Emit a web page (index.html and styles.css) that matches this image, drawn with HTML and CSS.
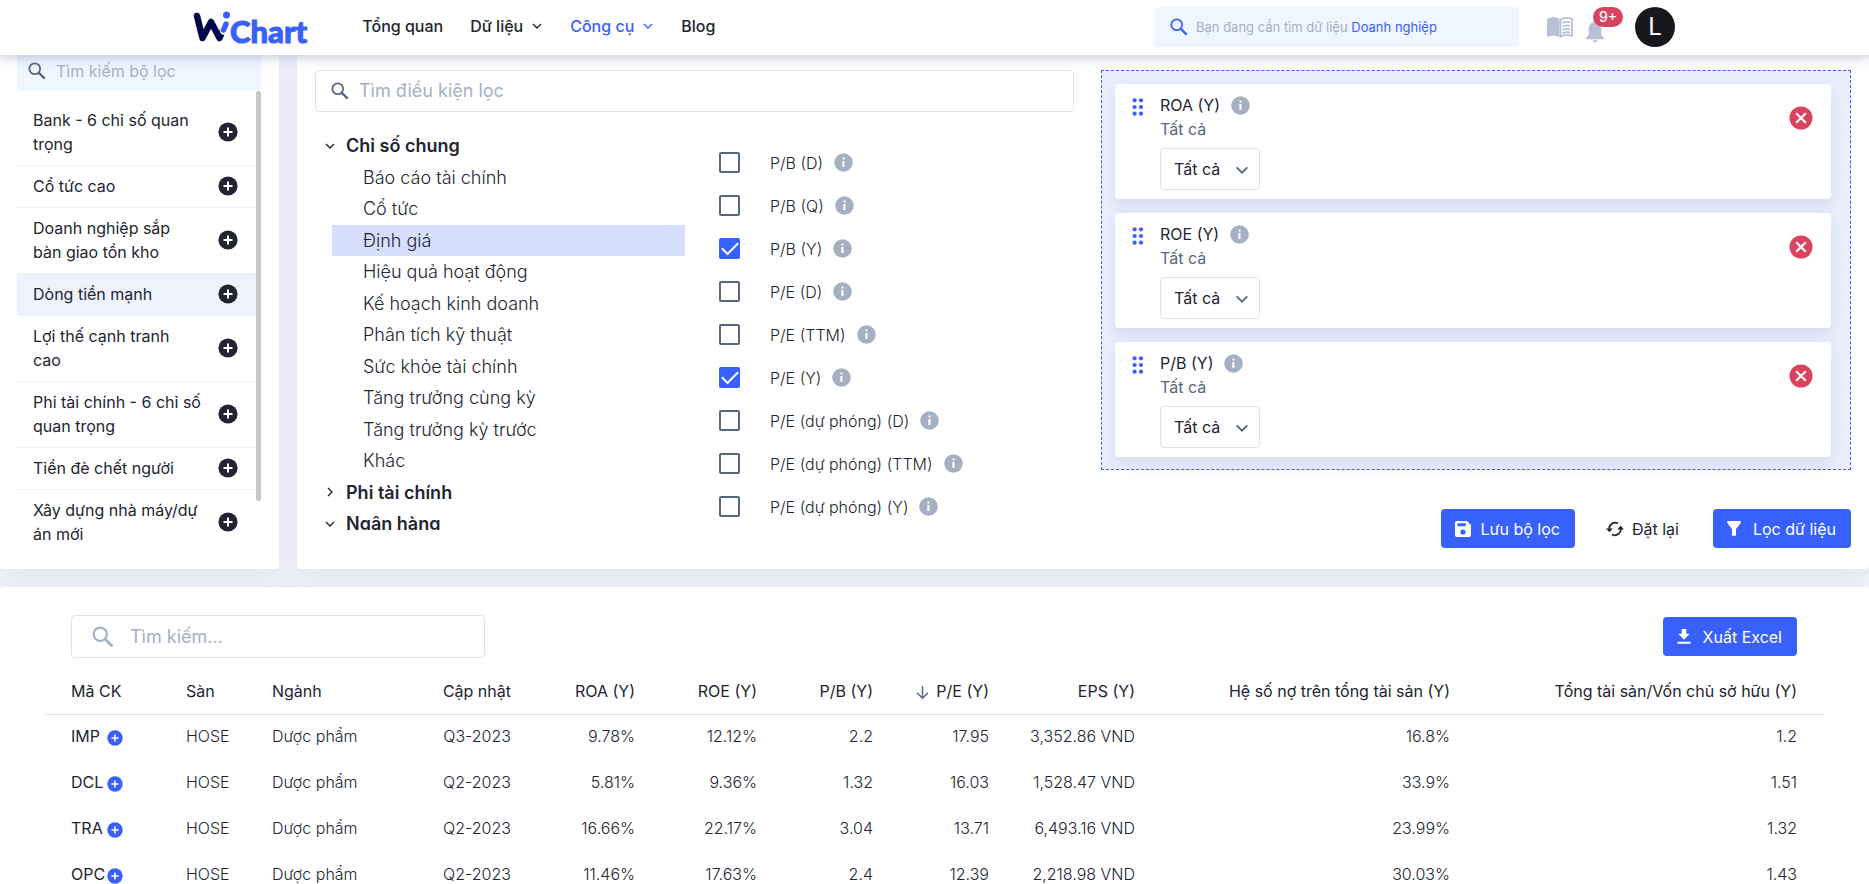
FILE: index.html
```html
<!DOCTYPE html>
<html lang="vi">
<head>
<meta charset="utf-8">
<title>WiChart - Bộ lọc cổ phiếu</title>
<link rel="stylesheet" href="styles.css">
</head>
<body>
<svg class="defs" aria-hidden="true">
  <symbol id="search" viewBox="0 0 20 20"><circle cx="7.5" cy="7.5" r="6" fill="none" stroke="currentColor" stroke-width="2"/><path d="M11.8 11.8 18.500 18.500" stroke="currentColor" stroke-width="2.600"/></symbol>
  <symbol id="down" viewBox="0 0 12 12"><path d="M2 4l4 4 4-4" fill="none" stroke="currentColor" stroke-width="1.400"/></symbol>
  <symbol id="plus" viewBox="0 0 20 20"><circle cx="10" cy="10" r="9.6" fill="currentColor"/><path d="M10 5.5v9M5.5 10h9" stroke="#fff" stroke-width="2"/></symbol>
  <symbol id="info" viewBox="0 0 20 20"><circle cx="10" cy="10" r="9.8" fill="#a6b0c3"/><path d="M9 4.8h2v2H9zM8.8 8.4H11v6.4H8.8z" fill="#fff"/></symbol>
  <symbol id="dots" viewBox="0 0 12 18"><g fill="currentColor"><circle cx="2.6" cy="2.3" r="2.1"/><circle cx="9" cy="2.3" r="2.1"/><circle cx="2.6" cy="9" r="2.1"/><circle cx="9" cy="9" r="2.1"/><circle cx="2.6" cy="15.7" r="2.1"/><circle cx="9" cy="15.7" r="2.1"/></g></symbol>
  <symbol id="remove" viewBox="0 0 24 24"><circle cx="12" cy="12" r="11.5" fill="#d9435e"/><path d="M7.2 7.2l9.600 9.600M16.800 7.200l-9.600 9.600" stroke="#fff" stroke-width="2.2"/></symbol>
</svg>
<div class="page">
<header class="header">
  <a class="logo" href="#" aria-label="WiChart">
    <svg width="37" height="33" viewBox="0 0 37 33"><g fill="none" stroke-linecap="round" stroke-linejoin="round"><path d="M4 5 9.500 27 18 11 26.500 27 29.500 20" stroke="#03064a" stroke-width="6.500"/><path d="M34 12.500 31 19.500" stroke="#fff" stroke-width="8.500"/><path d="M33 13 30.500 19" stroke="#3861fb" stroke-width="5.500"/></g><circle cx="33.500" cy="4" r="3.500" fill="#3861fb"/></svg>
    <span class="logo-name">Chart</span>
  </a>
  <nav class="nav">
    <a href="#">Tổng quan</a>
    <a href="#">Dữ liệu <svg class="i12"><use href="#down"/></svg></a>
    <a class="on" href="#">Công cụ <svg class="i12"><use href="#down"/></svg></a>
    <a href="#">Blog</a>
  </nav>
  <button class="find" type="button"><svg class="i18"><use href="#search"/></svg><span>Bạn đang cần tìm dữ liệu <b>Doanh nghiệp</b></span></button>
  <button class="plain book" type="button" aria-label="Hướng dẫn"><svg width="26" height="21" viewBox="0 0 26 21"><path d="M0 2C4-.2 9-.2 12.500 2.200V20.500C9 18.300 4 18.300 0 20.200z" fill="#b7c0d4"/><path d="M13.500 2.700C17 .5 21 .5 25 2.200V19C21 17.500 17 17.500 13.500 19.700z" fill="#fff" stroke="#b7c0d4" stroke-width="1.800"/><path d="M15.500 6c2.500-1.300 5-1.300 7.500-.7M15.500 9.500c2.500-1.300 5-1.300 7.500-.7M15.500 13c2.500-1.300 5-1.300 7.500-.7M15.500 16.300c2.500-1.300 5-1.300 7.500-.7" fill="none" stroke="#b7c0d4" stroke-width="1.700"/></svg></button>
  <button class="plain bell" type="button" aria-label="Thông báo"><svg width="20" height="23" viewBox="0 0 20 23"><path d="M10 0a1.500 1.500 0 0 1 1.500 1.500v.8C14.500 3 16.300 5.500 16.300 9v6l3 3.200v1H.7v-1l3-3.200V9c0-3.500 1.800-6 4.800-6.700v-.8A1.500 1.500 0 0 1 10 0zM7.700 20.300h4.600a2.300 2.300 0 0 1-4.600 0z" fill="#b7c0d4"/></svg><span class="badge">9+</span></button>
  <button class="avatar" type="button">L</button>
</header>

<main class="main">
  <aside class="card side">
    <label class="side-search"><svg class="i18"><use href="#search"/></svg><input type="text" placeholder="Tìm kiếm bộ lọc" aria-label="Tìm kiếm bộ lọc"></label>
    <div class="side-body">
      <ul class="presets">
        <li><span>Bank - 6 chỉ số quan trọng</span><button class="plain" type="button" aria-label="Thêm"><svg class="i20"><use href="#plus"/></svg></button></li>
        <li><span>Cổ tức cao</span><button class="plain" type="button" aria-label="Thêm"><svg class="i20"><use href="#plus"/></svg></button></li>
        <li><span>Doanh nghiệp sắp bàn giao tồn kho</span><button class="plain" type="button" aria-label="Thêm"><svg class="i20"><use href="#plus"/></svg></button></li>
        <li class="on"><span>Dòng tiền mạnh</span><button class="plain" type="button" aria-label="Thêm"><svg class="i20"><use href="#plus"/></svg></button></li>
        <li><span>Lợi thế cạnh tranh<br>cao</span><button class="plain" type="button" aria-label="Thêm"><svg class="i20"><use href="#plus"/></svg></button></li>
        <li><span>Phi tài chính - 6 chỉ số quan trọng</span><button class="plain" type="button" aria-label="Thêm"><svg class="i20"><use href="#plus"/></svg></button></li>
        <li><span>Tiền đè chết người</span><button class="plain" type="button" aria-label="Thêm"><svg class="i20"><use href="#plus"/></svg></button></li>
        <li><span>Xây dựng nhà máy/dự án mới</span><button class="plain" type="button" aria-label="Thêm"><svg class="i20"><use href="#plus"/></svg></button></li>
      </ul>
      <div class="thumb"></div>
    </div>
  </aside>

  <section class="card builder">
    <div class="pick">
      <label class="box cond"><svg class="i18"><use href="#search"/></svg><input type="text" placeholder="Tìm điều kiện lọc" aria-label="Tìm điều kiện lọc"></label>
      <div class="pick-body">
        <div class="tree">
          <div class="group"><svg class="i12"><use href="#down"/></svg>Chỉ số chung</div>
          <ul>
            <li>Báo cáo tài chính</li><li>Cổ tức</li><li class="on">Định giá</li><li>Hiệu quả hoạt động</li><li>Kế hoạch kinh doanh</li><li>Phân tích kỹ thuật</li><li>Sức khỏe tài chính</li><li>Tăng trưởng cùng kỳ</li><li>Tăng trưởng kỳ trước</li><li>Khác</li>
          </ul>
          <div class="group shut"><svg class="i12"><use href="#down"/></svg>Phi tài chính</div>
          <div class="group"><svg class="i12"><use href="#down"/></svg>Ngân hàng</div>
        </div>
        <div class="checks">
          <label><input type="checkbox"><span>P/B (D)</span><svg class="i19"><use href="#info"/></svg></label>
          <label><input type="checkbox"><span>P/B (Q)</span><svg class="i19"><use href="#info"/></svg></label>
          <label><input type="checkbox" checked><span>P/B (Y)</span><svg class="i19"><use href="#info"/></svg></label>
          <label><input type="checkbox"><span>P/E (D)</span><svg class="i19"><use href="#info"/></svg></label>
          <label><input type="checkbox"><span>P/E (TTM)</span><svg class="i19"><use href="#info"/></svg></label>
          <label><input type="checkbox" checked><span>P/E (Y)</span><svg class="i19"><use href="#info"/></svg></label>
          <label><input type="checkbox"><span>P/E (dự phóng) (D)</span><svg class="i19"><use href="#info"/></svg></label>
          <label><input type="checkbox"><span>P/E (dự phóng) (TTM)</span><svg class="i19"><use href="#info"/></svg></label>
          <label><input type="checkbox"><span>P/E (dự phóng) (Y)</span><svg class="i19"><use href="#info"/></svg></label>
        </div>
      </div>
    </div>
    <div class="chosen">
      <div class="drop">
        <article class="rule"><svg class="drag"><use href="#dots"/></svg>
          <div class="rule-body"><div class="rule-name">ROA (Y)<svg class="i19"><use href="#info"/></svg></div><div class="rule-value">Tất cả</div>
          <div class="pickbox"><select aria-label="ROA (Y)"><option>Tất cả</option></select><svg class="caret"><use href="#down"/></svg></div></div>
          <button class="plain" type="button" aria-label="Xóa"><svg class="i24"><use href="#remove"/></svg></button></article>
        <article class="rule"><svg class="drag"><use href="#dots"/></svg>
          <div class="rule-body"><div class="rule-name">ROE (Y)<svg class="i19"><use href="#info"/></svg></div><div class="rule-value">Tất cả</div>
          <div class="pickbox"><select aria-label="ROE (Y)"><option>Tất cả</option></select><svg class="caret"><use href="#down"/></svg></div></div>
          <button class="plain" type="button" aria-label="Xóa"><svg class="i24"><use href="#remove"/></svg></button></article>
        <article class="rule"><svg class="drag"><use href="#dots"/></svg>
          <div class="rule-body"><div class="rule-name">P/B (Y)<svg class="i19"><use href="#info"/></svg></div><div class="rule-value">Tất cả</div>
          <div class="pickbox"><select aria-label="P/B (Y)"><option>Tất cả</option></select><svg class="caret"><use href="#down"/></svg></div></div>
          <button class="plain" type="button" aria-label="Xóa"><svg class="i24"><use href="#remove"/></svg></button></article>
      </div>
      <div class="actions">
        <button class="btn" type="button"><svg width="16" height="16" viewBox="0 0 16 16"><path d="M2 0h10l4 4v10a2 2 0 0 1-2 2H2a2 2 0 0 1-2-2V2a2 2 0 0 1 2-2z" fill="#fff"/><path d="M2.300 2.300h8.500v3H2.300z" fill="#3861fb"/><circle cx="8" cy="11" r="2.600" fill="#3861fb"/></svg>Lưu bộ lọc</button>
        <button class="btn ghost" type="button"><svg width="18" height="16" viewBox="0 0 18 16"><path d="M3.500 9A5.800 5.800 0 0 1 12 2.500M14.500 7A5.800 5.800 0 0 1 6 13.500" fill="none" stroke="#222531" stroke-width="1.800"/><path d="M0 7.500h6.800L3.400 11.200zM11.200 8.500H18L14.600 4.800z" fill="#222531"/></svg>Đặt lại</button>
        <button class="btn wide" type="button"><svg width="14" height="15" viewBox="0 0 14 15"><path d="M.3 0h13.400v2L9 8v6.700H5V8L.3 2z" fill="#fff"/></svg>Lọc dữ liệu</button>
      </div>
    </div>
  </section>
</main>

<section class="card result">
  <div class="tools">
    <label class="box query"><svg class="i22"><use href="#search"/></svg><input type="text" placeholder="Tìm kiếm..." aria-label="Tìm kiếm"></label>
    <button class="btn wide" type="button"><svg width="14" height="15" viewBox="0 0 14 15"><path d="M4.700 0h4.600v4.800h3.500L7 10.800 1.200 4.800h3.500zM.5 12.700h13v2H.5z" fill="#fff"/></svg>Xuất Excel</button>
  </div>
  <table>
    <colgroup><col class="c1"><col class="c2"><col class="c3"><col class="c4"><col class="c5"><col class="c6"><col class="c7"><col class="c8"><col class="c9"><col class="c10"><col class="c11"></colgroup>
    <thead><tr><th>Mã CK</th><th>Sàn</th><th>Ngành</th><th>Cập nhật</th><th>ROA (Y)</th><th>ROE (Y)</th><th>P/B (Y)</th><th><svg width="13" height="15" viewBox="0 0 13 15"><path d="M6.500 1v12M1 7.800l5.500 5.500L12 7.800" fill="none" stroke="#58667e" stroke-width="1.500"/></svg>P/E (Y)</th><th>EPS (Y)</th><th>Hệ số nợ trên tổng tài sản (Y)</th><th>Tổng tài sản/Vốn chủ sở hữu (Y)</th></tr></thead>
    <tbody>
      <tr><td><span class="code">IMP</span><svg class="i16"><use href="#plus"/></svg></td><td>HOSE</td><td>Dược phẩm</td><td>Q3-2023</td><td>9.78%</td><td>12.12%</td><td>2.2</td><td>17.95</td><td>3,352.86 VND</td><td>16.8%</td><td>1.2</td></tr>
      <tr><td><span class="code">DCL</span><svg class="i16"><use href="#plus"/></svg></td><td>HOSE</td><td>Dược phẩm</td><td>Q2-2023</td><td>5.81%</td><td>9.36%</td><td>1.32</td><td>16.03</td><td>1,528.47 VND</td><td>33.9%</td><td>1.51</td></tr>
      <tr><td><span class="code">TRA</span><svg class="i16"><use href="#plus"/></svg></td><td>HOSE</td><td>Dược phẩm</td><td>Q2-2023</td><td>16.66%</td><td>22.17%</td><td>3.04</td><td>13.71</td><td>6,493.16 VND</td><td>23.99%</td><td>1.32</td></tr>
      <tr><td><span class="code">OPC</span><svg class="i16"><use href="#plus"/></svg></td><td>HOSE</td><td>Dược phẩm</td><td>Q2-2023</td><td>11.46%</td><td>17.63%</td><td>2.4</td><td>12.39</td><td>2,218.98 VND</td><td>30.03%</td><td>1.43</td></tr>
    </tbody>
  </table>
</section>
</div>
</body>
</html>
```
FILE: styles.css
```css
* { box-sizing: border-box; }
body { margin: 0; background: #f2f4fa; color: #222531; font-family: Inter, "Noto Sans", sans-serif; font-size: 16px; line-height: 24px; }
ul { list-style: none; margin: 0; padding: 0; }
svg { display: block; flex: none; }
a { color: inherit; text-decoration: none; }
button, input, select { font: inherit; color: inherit; }
.defs { display: none; }
.i12 { width: 12px; height: 12px; }
.i16 { width: 16px; height: 16px; }
.i18 { width: 18px; height: 18px; }
.i19 { width: 19px; height: 19px; }
.i20 { width: 20px; height: 20px; }
.i22 { width: 22px; height: 22px; }
.i24 { width: 24px; height: 24px; }
.page { height: 100vh; overflow: hidden; display: flex; flex-direction: column; }
.plain { border: 0; background: none; padding: 0; color: inherit; }

/* Header */
.header { flex: none; height: 55px; padding: 0 194px 1px 193px; display: flex; align-items: center; background: #fff; box-shadow: 0 1px 12px rgba(70, 80, 130, .38); z-index: 2; }
.logo { display: flex; align-items: center; }
.logo-name { font: 900 31px/30px Lato, sans-serif; color: #3861fb; padding-top: 7px; -webkit-text-stroke: 1px #3861fb; }
.nav { display: flex; gap: 27px; margin-left: 55px; padding-bottom: 2px; font-weight: 500; }
.nav a { display: flex; align-items: center; gap: 8px; }
.nav .on { color: #3861fb; }
.find { margin-left: auto; width: 365px; height: 40px; border: 0; border-radius: 4px; background: #eff6ff; padding: 0 16px; display: flex; align-items: center; gap: 8px; font-size: 13px; color: #a6b0c3; }
.find svg, .find b { color: #3861fb; font-weight: 400; }
.book { margin-left: 28px; }
.bell { position: relative; margin: 0 30px 0 12px; padding-top: 8px; }
.badge { position: absolute; left: 8px; top: -5px; width: 30px; height: 20px; border-radius: 10px; background: #d9435e; color: #fff; font-size: 14px; line-height: 20px; font-weight: 500; }
.avatar { width: 40px; height: 40px; border: 0; border-radius: 50%; padding: 0; background: #17181b; color: #fff; font-size: 24px; }

/* Filter area */
.main { flex: none; display: flex; gap: 18px; margin-bottom: 18px; }
.card { background: #fff; border-radius: 4px; box-shadow: 0 8px 24px rgba(88, 102, 150, .1); }
.side { flex: none; width: 279px; padding: 0 18px 0 17px; }
.side-search { display: flex; align-items: center; gap: 10px; height: 36px; padding: 0 11px 4px; background: #eff6ff; border-radius: 0 0 4px 4px; color: #58667e; }
input[type=text] { flex: 1; min-width: 0; border: 0; padding: 0; outline: 0; background: none; }
input::placeholder { color: #a6b0c3; opacity: 1; }
.side-body { display: flex; }
.presets { flex: 1; padding-top: 9px; }
.presets li { display: flex; align-items: center; justify-content: space-between; padding: 8px 18px 9px 16px; border-bottom: 1px solid #eff2f5; }
.presets li:last-child { border-bottom: 0; }
.presets span { width: 169px; }
.presets .on { background: #eef2fd; }
.thumb { width: 5px; height: 410px; border-radius: 3px; background: #c8c8c8; }
.builder { flex: 1; display: flex; gap: 27px; padding: 15px 18px 21px; }
.pick { flex: 759; }
.box { display: flex; align-items: center; border: 1px solid #dfe2ea; border-radius: 4px; height: 42px; font-size: 18px; }
.cond { gap: 10px; padding: 0 15px; color: #58667e; }
.pick-body { display: grid; grid-template-columns: 370px 1fr; column-gap: 32px; margin-top: 18px; height: 400px; overflow: hidden; }
.tree { font-size: 18px; line-height: 1.75; }
.tree li { margin-left: 17px; padding-left: 31px; font-weight: 300; }
.tree .on { background: #d7dfff; }
.group { display: flex; align-items: center; gap: 10px; padding-left: 9px; font-weight: 600; }
.shut svg { transform: rotate(-90deg); }
.checks { padding-top: 11px; }
.checks label { display: flex; align-items: center; height: 43px; font-weight: 300; }
.checks input { appearance: none; width: 21px; height: 21px; margin: 0 30px 0 2px; border: 2px solid #58667e; border-radius: 2px; }
.checks input:checked { border-color: #3861fb; background: #3861fb; display: grid; place-items: center; }
.checks input:checked::after { content: ""; width: 14px; height: 7px; border: solid #fff; border-width: 0 0 2px 2px; transform: translateY(-2px) rotate(-45deg); }
.checks svg { margin-left: 11px; }
.chosen { flex: 750; }
.drop { display: grid; gap: 14px; padding: 13px 19px 12px 13px; border: 1px dashed #3861fb; background: #eaeefd; }
.rule { display: flex; align-items: flex-start; padding: 9px 18px 9px 17px; border-radius: 4px; background: #fff; box-shadow: 0 6px 16px rgba(88, 102, 150, .14); }
.rule-body { flex: 1; }
.rule button { margin-top: 13px; }
.drag { width: 12px; height: 18px; margin: 5px 16px 0 0; color: #3861fb; }
.rule-name { display: flex; align-items: center; gap: 11px; }
.rule-value { color: #58667e; }
.pickbox { position: relative; width: 100px; margin-top: 7px; }
.pickbox select { display: block; appearance: none; width: 100%; height: 42px; padding: 0 13px; border: 1px solid #dfe2ea; border-radius: 4px; background: #fff; }
.caret { position: absolute; right: 10px; top: 14px; width: 16px; height: 16px; color: #58667e; pointer-events: none; }
.actions { display: flex; justify-content: flex-end; margin-top: 39px; }
.btn { display: flex; align-items: center; gap: 10px; height: 39px; padding: 0 15px 0 14px; border: 0; border-radius: 4px; background: #3861fb; color: #fff; }
.ghost { gap: 8px; padding: 0 34px 0 31px; background: none; color: #222531; }
.wide { gap: 12px; }

/* Results */
.result { flex: none; padding: 28px 45px; }
.tools { display: flex; align-items: center; justify-content: space-between; padding: 0 27px 0 26px; }
.query { width: 414px; height: 43px; gap: 16px; padding: 0 20px; color: #a6b0c3; }
table { width: 100%; table-layout: fixed; border-collapse: collapse; margin-top: 10px; }
th, td { padding: 0 27px 0 0; height: 46px; text-align: right; white-space: nowrap; }
th { font-weight: 400; border-bottom: 1px solid #dfe2ea; }
td { font-weight: 300; padding-bottom: 2px; }
th:nth-child(-n+3), td:nth-child(-n+3) { text-align: left; padding-left: 26px; padding-right: 0; }
th svg, td svg { display: inline-block; vertical-align: -3px; }
th svg { margin-right: 7px; }
td svg { color: #3861fb; vertical-align: -4px; }
.code { display: inline-block; width: 36px; font-weight: 400; }
.c1 { width: 115px; } .c2 { width: 86px; } .c3 { width: 172px; } .c4 { width: 120px; } .c5 { width: 124px; } .c6 { width: 122px; }
.c7, .c8 { width: 116px; } .c9 { width: 146px; } .c10 { width: 315px; } .c11 { width: 347px; }
```
